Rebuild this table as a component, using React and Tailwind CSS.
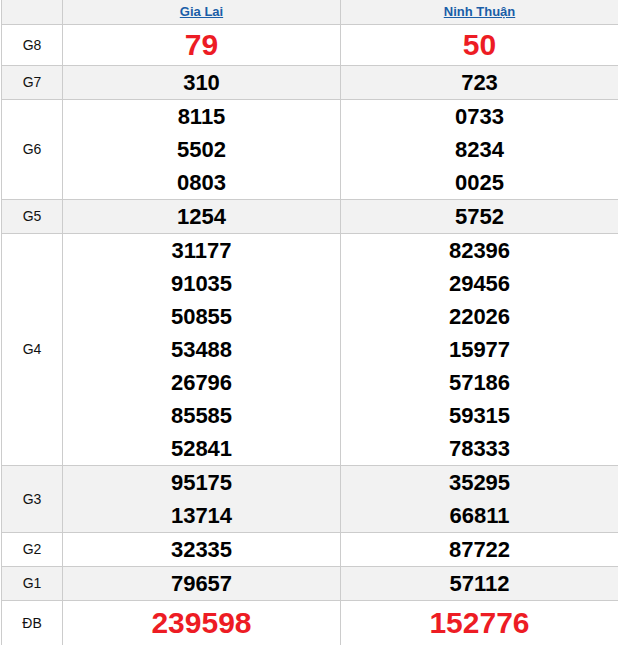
import React from 'react';

const rows = [
  { label: 'G8', a: ['79'], b: ['50'], red: 'h-[40px] leading-[40px]' },
  { label: 'G7', a: ['310'], b: ['723'] },
  { label: 'G6', a: ['8115', '5502', '0803'], b: ['0733', '8234', '0025'] },
  { label: 'G5', a: ['1254'], b: ['5752'] },
  {
    label: 'G4',
    a: ['31177', '91035', '50855', '53488', '26796', '85585', '52841'],
    b: ['82396', '29456', '22026', '15977', '57186', '59315', '78333'],
  },
  { label: 'G3', a: ['95175', '13714'], b: ['35295', '66811'] },
  { label: 'G2', a: ['32335'], b: ['87722'] },
  { label: 'G1', a: ['79657'], b: ['57112'] },
  { label: 'ĐB', a: ['239598'], b: ['152776'], red: 'h-[44px] leading-[44px]' },
];

const Numbers = ({ items, red }) => (
  <div className="flex flex-col items-center justify-center">
    {items.map((n, i) => (
      <div
        key={i}
        className={
          red
            ? `${red} text-[30px] font-bold text-[#ed1c24]`
            : 'h-[33px] leading-[33px] text-[22px] font-bold text-black'
        }
      >
        {n}
      </div>
    ))}
  </div>
);

export default function App() {
  return (
    <div className="w-[618px] h-[645px] overflow-hidden bg-white pl-px font-['Liberation_Sans',Arial,sans-serif]">
      <div className="w-[617px]">
        {/* header */}
        <div className="grid grid-cols-[61px_278px_278px] bg-[#f2f2f2] border-b border-[#cccccc]">
          <div className="h-[24px] border-l border-[#cccccc]" />
          <div className="h-[24px] border-l border-[#cccccc] flex items-center justify-center">
            <a href="#" className="text-[13px] font-bold text-[#1a5ea8] underline">Gia Lai</a>
          </div>
          <div className="h-[24px] border-l border-[#cccccc] flex items-center justify-center">
            <a href="#" className="text-[13px] font-bold text-[#1a5ea8] underline">Ninh Thuận</a>
          </div>
        </div>

        {rows.map((r, i) => (
          <div
            key={r.label}
            className={`grid grid-cols-[61px_278px_278px] border-b border-[#cccccc] ${i % 2 === 1 ? 'bg-[#f2f2f2]' : 'bg-white'}`}
          >
            <div className="border-l border-[#cccccc] flex items-center justify-center text-[14px] text-[#111]">
              {r.label}
            </div>
            <div className="border-l border-[#cccccc]">
              <Numbers items={r.a} red={r.red} />
            </div>
            <div className="border-l border-[#cccccc]">
              <Numbers items={r.b} red={r.red} />
            </div>
          </div>
        ))}
      </div>
    </div>
  );
}
